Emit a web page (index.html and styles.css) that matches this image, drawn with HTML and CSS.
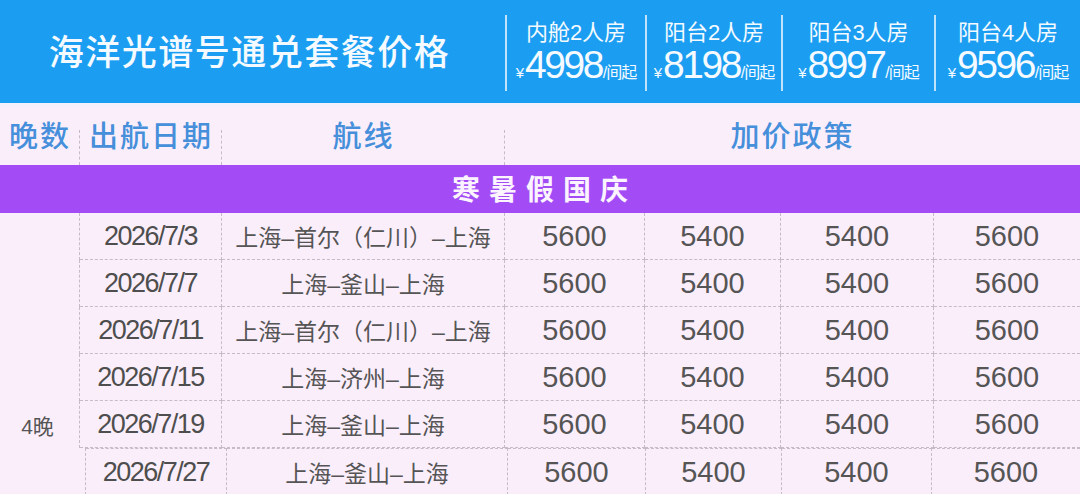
FILE: index.html
```html
<!DOCTYPE html>
<html lang="zh-CN">
<head>
<meta charset="utf-8">
<title>海洋光谱号通兑套餐价格</title>
<link rel="stylesheet" href="styles.css">
</head>
<body>
<div class="page">
  <header class="top">
    <div class="title">海洋光谱号通兑套餐价格</div>
    <div class="room">
      <div class="room-name">内舱2人房</div>
      <div class="room-price"><span class="yen">¥</span><span class="num">4998</span><span class="unit">/间起</span></div>
    </div>
    <div class="room">
      <div class="room-name">阳台2人房</div>
      <div class="room-price"><span class="yen">¥</span><span class="num">8198</span><span class="unit">/间起</span></div>
    </div>
    <div class="room">
      <div class="room-name">阳台3人房</div>
      <div class="room-price"><span class="yen">¥</span><span class="num">8997</span><span class="unit">/间起</span></div>
    </div>
    <div class="room">
      <div class="room-name">阳台4人房</div>
      <div class="room-price"><span class="yen">¥</span><span class="num">9596</span><span class="unit">/间起</span></div>
    </div>
  </header>

  <div class="subhead">
    <div class="sh sh-line">晚数</div>
    <div class="sh sh-line">出航日期</div>
    <div class="sh sh-line">航线</div>
    <div class="sh">加价政策</div>
  </div>

  <div class="band">寒暑假国庆</div>

  <div class="rows">
    <div class="row">
      <div class="nights"></div>
      <div class="cell date">2026/7/3</div>
      <div class="cell route">上海–首尔（仁川）–上海</div>
      <div class="cell val">5600</div>
      <div class="cell val">5400</div>
      <div class="cell val">5400</div>
      <div class="cell val">5600</div>
    </div>
    <div class="row">
      <div class="nights"></div>
      <div class="cell date">2026/7/7</div>
      <div class="cell route">上海–釜山–上海</div>
      <div class="cell val">5600</div>
      <div class="cell val">5400</div>
      <div class="cell val">5400</div>
      <div class="cell val">5600</div>
    </div>
    <div class="row">
      <div class="nights"></div>
      <div class="cell date">2026/7/11</div>
      <div class="cell route">上海–首尔（仁川）–上海</div>
      <div class="cell val">5600</div>
      <div class="cell val">5400</div>
      <div class="cell val">5400</div>
      <div class="cell val">5600</div>
    </div>
    <div class="row">
      <div class="nights"></div>
      <div class="cell date">2026/7/15</div>
      <div class="cell route">上海–济州–上海</div>
      <div class="cell val">5600</div>
      <div class="cell val">5400</div>
      <div class="cell val">5400</div>
      <div class="cell val">5600</div>
    </div>
    <div class="row">
      <div class="nights">4晚</div>
      <div class="cell date">2026/7/19</div>
      <div class="cell route">上海–釜山–上海</div>
      <div class="cell val">5600</div>
      <div class="cell val">5400</div>
      <div class="cell val">5400</div>
      <div class="cell val">5600</div>
    </div>
    <div class="row row-last">
      <div class="nights"></div>
      <div class="cell date">2026/7/27</div>
      <div class="cell route">上海–釜山–上海</div>
      <div class="cell val">5600</div>
      <div class="cell val">5400</div>
      <div class="cell val">5400</div>
      <div class="cell val">5600</div>
    </div>
  </div>
</div>
</body>
</html>
```
FILE: styles.css
```css
* { box-sizing: border-box; }
html, body { margin: 0; padding: 0; }
body {
  width: 1080px;
  height: 494px;
  overflow: hidden;
  background: #fbeefb;
  font-family: "Liberation Sans", "Noto Sans CJK SC", sans-serif;
}
.page { width: 1080px; }

.top {
  display: grid;
  grid-template-columns: 505px 140px 136px 153px 146px;
  height: 106px;
  background: #1b9ef2;
  border-bottom: 3px solid #f4f0fb;
  color: #fff;
}
.title {
  align-self: center;
  text-align: center;
  font-family: "Noto Sans CJK SC", sans-serif;
  font-weight: 500;
  font-size: 35px;
  letter-spacing: 1.5px;
  padding-bottom: 4px;
  padding-right: 6px;
  color: #f4faff;
}
.room {
  margin-top: 15px;
  height: 76px;
  border-left: 2px solid #bfe3fb;
  display: flex;
  flex-direction: column;
  align-items: center;
}
.room-name {
  margin-top: 5px;
  font-size: 22px;
  line-height: 26px;
  color: #f4faff;
}
.room-price {
  display: flex;
  align-items: baseline;
  line-height: 38px;
  white-space: nowrap;
  color: #f4faff;
}
.yen { font-size: 15px; margin-right: 1px; }
.num { font-size: 39px; letter-spacing: -2.5px; }
.unit { font-size: 16px; letter-spacing: -1px; margin-left: 1px; }

.subhead {
  display: grid;
  grid-template-columns: 80px 142px 283px 575px;
  height: 59px;
  align-items: stretch;
}
.sh {
  display: flex;
  align-items: center;
  justify-content: center;
  font-family: "Noto Sans CJK SC", sans-serif;
  font-weight: 500;
  font-size: 29px;
  letter-spacing: 2px;
  color: #468fda;
  padding-bottom: 4px;
}
.sh-line {
  position: relative;
}
.sh-line::after {
  content: "";
  position: absolute;
  right: 0;
  top: 24px;
  bottom: 0;
  border-right: 1px dashed #c5bcc8;
}

.band {
  height: 48px;
  background: #a34cf6;
  color: #fbf4ff;
  text-align: center;
  font-family: "Noto Sans CJK SC", sans-serif;
  font-weight: 700;
  font-size: 28px;
  line-height: 46px;
  letter-spacing: 9px;
  padding-left: 9px;
}

.row {
  display: grid;
  grid-template-columns: 80px 142px 283px 140px 136px 153px 146px;
  height: 47px;
}
.row-last {
  grid-template-columns: 86px 141px 281px 138px 136px 150px 148px;
}
.nights {
  border-right: 1px dashed #c5bcc8;
  display: flex;
  align-items: center;
  justify-content: center;
  font-size: 21px;
  color: #555;
  padding-bottom: 0;
  padding-right: 4px;
}
.cell {
  display: flex;
  align-items: center;
  justify-content: center;
  border-right: 1px dashed #c5bcc8;
  border-bottom: 1px dashed #c5bcc8;
  color: #555;
  white-space: nowrap;
}
.cell:last-child { border-right: none; }
.row-last .cell { border-top: 1px dashed #c5bcc8; border-bottom: none; }
.date {
  font-size: 27px;
  letter-spacing: -1.5px;
  color: #4e4e4e;
}
.route {
  font-family: "Liberation Sans", "Noto Sans CJK SC", sans-serif;
  font-size: 23px;
}
.val {
  font-size: 29px;
}
```
